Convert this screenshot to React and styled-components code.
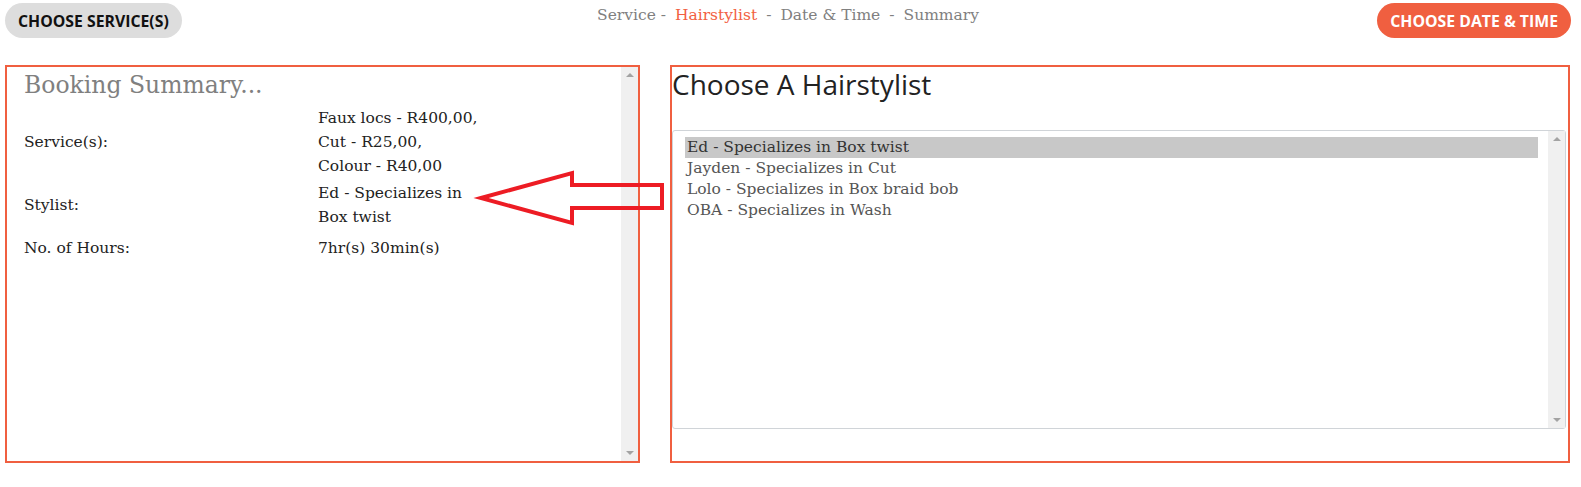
import React from 'react';
import styled, { createGlobalStyle } from 'styled-components';

const GlobalStyle = createGlobalStyle`
  body {
    margin: 0;
    background: #fff;
    font-family: "DejaVu Serif", "Liberation Serif", serif;
  }
`

const Page = styled.div`
  width: 1581px;
  height: 487px;
  position: relative;
  overflow: hidden;
`

const TopBar = styled.div`
  display: grid;
  grid-template-columns: 1fr auto 1fr;
  align-items: start;
  padding: 3px 10px 0 5px;
  height: 65px;
  box-sizing: border-box;
`

const PillButton = styled.button`
  justify-self: ${p => (p.$right ? 'end' : 'start')};
  height: 35px;
  padding: 0 13px;
  border: none;
  border-radius: 18px;
  background: ${p => (p.$primary ? '#f05f40' : '#dddddd')};
  color: ${p => (p.$primary ? '#ffffff' : '#111111')};
  font-family: "Open Sans", sans-serif;
  font-weight: 700;
  font-size: 15.8px;
  text-transform: uppercase;
  cursor: pointer;
`

const Steps = styled.nav`
  display: flex;
  gap: 9px;
  margin-top: 3px;
  font-size: 15.5px;
  color: #808080;
`

const Step = styled.span`
  color: ${p => (p.$active ? '#f26042' : '#808080')};
`

const Panels = styled.div`
  display: flex;
  gap: 30px;
  padding: 0 11px 0 5px;
`

const Panel = styled.section`
  border: 2px solid #f05f40;
  height: 398px;
  box-sizing: border-box;
  flex: ${p => p.$flex};
  display: flex;
  flex-direction: ${p => (p.$row ? 'row' : 'column')};
`

const SummaryBody = styled.div`
  flex: 1;
  padding: 0 0 0 17px;
`

const SummaryTitle = styled.h2`
  margin: 4px 0 7px;
  font-weight: 400;
  font-size: 23.5px;
  color: #808080;
`

const SummaryTable = styled.div`
  display: grid;
  grid-template-columns: 294px 170px;
  row-gap: 3px;
  font-size: 15.5px;
  color: #222;
  line-height: 24px;
`

const Label = styled.div`
  align-self: center;
  margin-top: ${p => (p.$spaced ? '4px' : '0')};
`

const Value = styled.div`
  margin-top: ${p => (p.$spaced ? '4px' : '0')};
`

const Heading = styled.h2`
  margin: 0;
  height: 63px;
  font-family: "Open Sans", sans-serif;
  font-weight: 400;
  font-size: 28px;
  color: #222;
  line-height: 34px;
`

const ListBox = styled.div`
  margin: 0 2px 0 0;
  height: 299px;
  border: 1px solid #d0d4d8;
  border-radius: 3px;
  display: flex;
  box-sizing: border-box;
`

const Options = styled.ul`
  list-style: none;
  margin: 0;
  padding: 6px 10px 0 12px;
  flex: 1;
  font-size: 15.5px;
  color: #555;
`

const Option = styled.li`
  height: 21px;
  line-height: 21px;
  padding-left: 2px;
  background: ${p => (p.$selected ? '#c8c8c8' : 'transparent')};
  color: ${p => (p.$selected ? '#333' : '#555')};
`

const Scrollbar = styled.div`
  width: 17px;
  flex: none;
  background: #f0f0f0;
  display: flex;
  flex-direction: column;
  justify-content: space-between;
  align-items: center;
  padding: 6px 0;
  box-sizing: border-box;
`

const ScrollArrow = styled.span`
  width: 0;
  height: 0;
  border-left: 4px solid transparent;
  border-right: 4px solid transparent;
  ${p => (p.$down ? 'border-top: 4px solid #a3a3a3;' : 'border-bottom: 4px solid #a3a3a3;')}
`

const Arrow = styled.svg`
  position: absolute;
  left: 0;
  top: 0;
  pointer-events: none;
`

const stylists = [
  'Ed - Specializes in Box twist',
  'Jayden - Specializes in Cut',
  'Lolo - Specializes in Box braid bob',
  'OBA - Specializes in Wash',
]

export default function App() {
  return (
    <Page>
      <GlobalStyle />
      <TopBar>
        <PillButton>Choose Service(s)</PillButton>
        <Steps>
          <Step>Service -</Step>
          <Step $active>Hairstylist</Step>
          <Step>-</Step>
          <Step>Date &amp; Time</Step>
          <Step>-</Step>
          <Step>Summary</Step>
        </Steps>
        <PillButton $primary $right>Choose Date &amp; Time</PillButton>
      </TopBar>
      <Panels>
        <Panel $flex="0 0 635px" $row>
          <SummaryBody>
            <SummaryTitle>Booking Summary...</SummaryTitle>
            <SummaryTable>
              <Label>Service(s):</Label>
              <Value>
                Faux locs - R400,00,<br />
                Cut - R25,00,<br />
                Colour - R40,00
              </Value>
              <Label>Stylist:</Label>
              <Value>Ed - Specializes in Box twist</Value>
              <Label $spaced>No. of Hours:</Label>
              <Value $spaced>7hr(s) 30min(s)</Value>
            </SummaryTable>
          </SummaryBody>
          <Scrollbar>
            <ScrollArrow />
            <ScrollArrow $down />
          </Scrollbar>
        </Panel>
        <Panel $flex="1">
          <Heading>Choose A Hairstylist</Heading>
          <ListBox>
            <Options>
              {stylists.map((s, i) => (
                <Option key={s} $selected={i === 0}>{s}</Option>
              ))}
            </Options>
            <Scrollbar>
              <ScrollArrow />
              <ScrollArrow $down />
            </Scrollbar>
          </ListBox>
        </Panel>
      </Panels>
      <Arrow width="1581" height="487">
        <polygon
          points="481,198 572,173 572,185 662,185 662,208 572,208 572,223"
          fill="none"
          stroke="#ed1c24"
          strokeWidth="4"
          strokeLinejoin="miter"
        />
      </Arrow>
    </Page>
  )
}
